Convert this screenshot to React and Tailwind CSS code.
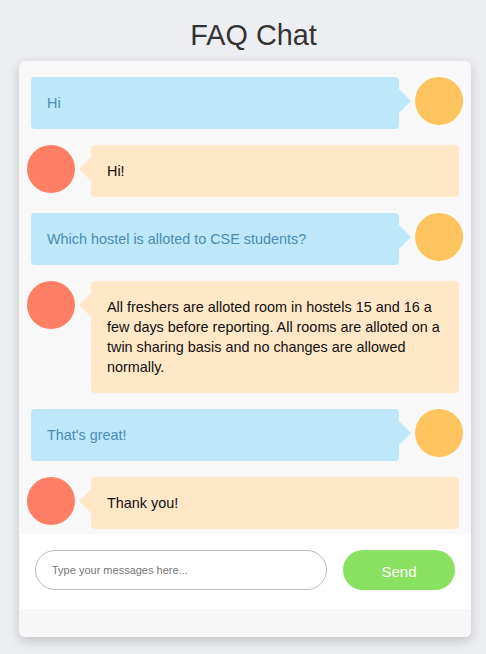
import React from "react";

const messages = [
  { from: "user", text: "Hi" },
  { from: "bot", text: "Hi!" },
  { from: "user", text: "Which hostel is alloted to CSE students?" },
  {
    from: "bot",
    text: "All freshers are alloted room in hostels 15 and 16 a few days before reporting. All rooms are alloted on a twin sharing basis and no changes are allowed normally.",
  },
  { from: "user", text: "That's great!" },
  { from: "bot", text: "Thank you!" },
];

function UserRow({ text }) {
  return (
    <div className="flex justify-end items-start">
      <div className="relative w-[368px] rounded-[4px] bg-[#bee7fa] px-4 py-4 text-[14.4px] leading-5 text-[#4a8cb2]">
        {text}
        <span className="absolute right-[-12px] top-[12px] h-0 w-0 border-y-[12px] border-l-[12px] border-y-transparent border-l-[#bee7fa]" />
      </div>
      <div className="ml-4 h-12 w-12 shrink-0 rounded-full bg-[#ffc45f]" />
    </div>
  );
}

function BotRow({ text }) {
  return (
    <div className="flex justify-start items-start">
      <div className="mr-4 h-12 w-12 shrink-0 rounded-full bg-[#ff7f66]" />
      <div className="relative w-[368px] rounded-[4px] bg-[#ffe7c7] px-4 py-4 text-[14.4px] leading-5 text-[#111111]">
        {text}
        <span className="absolute left-[-12px] top-[12px] h-0 w-0 border-y-[12px] border-r-[12px] border-y-transparent border-r-[#ffe7c7]" />
      </div>
    </div>
  );
}

export default function App() {
  return (
    <div
      className="min-h-[654px] w-full bg-[#edeef2]"
      style={{ fontFamily: '"Liberation Sans", Arial, sans-serif' }}
    >
      <div className="pt-[19px] pl-[36px] w-[471px] text-center text-[28.8px] leading-8 text-[#333333]">
        FAQ Chat
      </div>
      <div className="mt-[10px] ml-[19px] w-[452px] overflow-hidden rounded-md bg-[#f8f8f8] shadow-[0_4px_12px_rgba(0,0,0,0.18)]">
        <div className="h-[473px] overflow-hidden px-2 pt-4 flex flex-col gap-4">
          {messages.map((m, i) =>
            m.from === "user" ? (
              <UserRow key={i} text={m.text} />
            ) : (
              <BotRow key={i} text={m.text} />
            )
          )}
        </div>
        <div className="flex h-[75px] items-start gap-4 bg-white px-4 pt-4">
          <input
            type="text"
            placeholder="Type your messages here..."
            className="h-10 w-[292px] rounded-full border border-[#bbbbbb] bg-white px-4 text-[11px] text-[#333] outline-none placeholder:text-[#777777]"
            style={{ fontFamily: '"Liberation Sans", Arial, sans-serif' }}
          />
          <button
            className="h-10 w-[112px] rounded-full bg-[#8ae060] pt-1 text-[15px] text-white"
            style={{ fontFamily: '"Liberation Sans", Arial, sans-serif' }}
          >
            Send
          </button>
        </div>
        <div className="h-[28px] bg-[#f7f7f7]" />
      </div>
    </div>
  );
}
